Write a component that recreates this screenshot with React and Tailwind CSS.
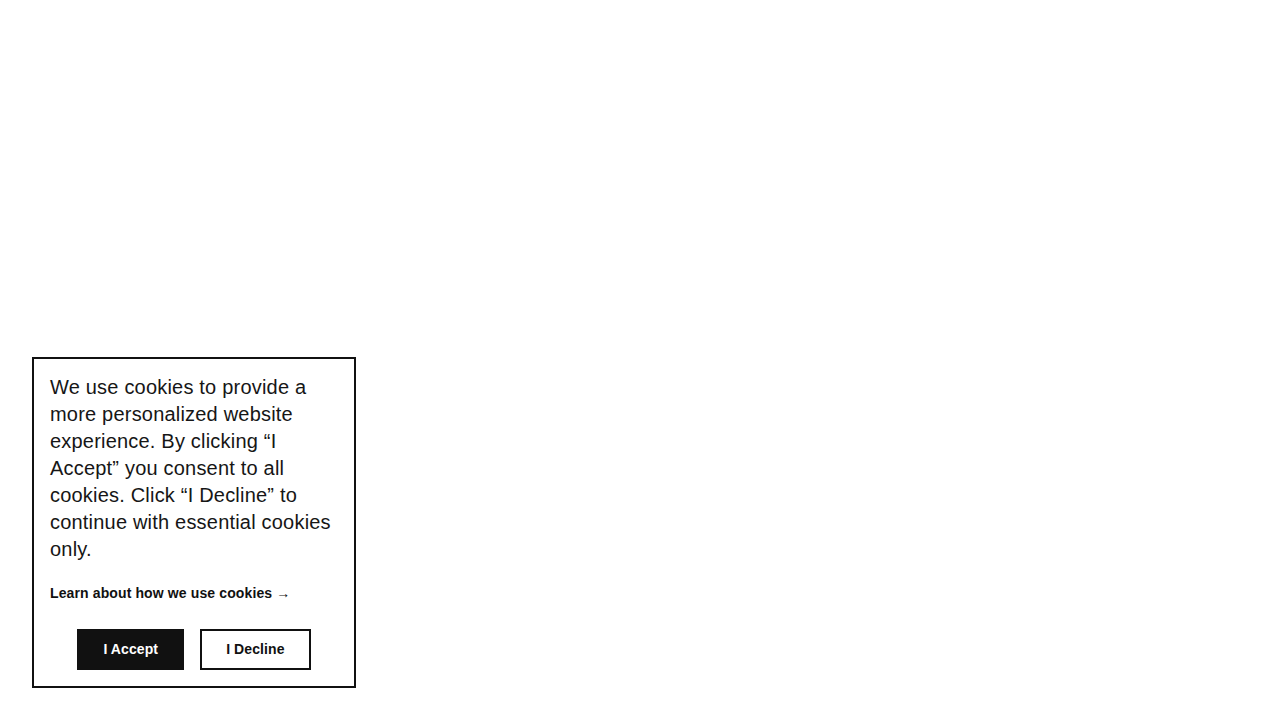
export default function App() {
  return (
    <div className="min-h-screen w-full bg-white" style={{ fontFamily: '"Liberation Sans", Arial, sans-serif' }}>
      <div className="fixed bottom-8 left-8 w-[324px] border-2 border-[#111] bg-white px-4 pt-[15px] pb-4 text-[#161616]">
        <p className="text-[20px] leading-[27px] tracking-[0.2px]">
          We use cookies to provide a more personalized website experience. By clicking “I Accept” you consent to all
          cookies. Click “I Decline” to continue with essential cookies only.
        </p>
        <a href="#" className="mt-5 block text-[14px] font-bold leading-5 tracking-[0.12px] text-[#111]">
          Learn about how we use cookies <span className="font-normal">→</span>
        </a>
        <div className="mt-[26px] flex justify-center gap-4">
          <button className="h-[41px] border-2 border-[#111] bg-[#111] px-6 text-[14px] font-bold tracking-[0.1px] text-white">
            I Accept
          </button>
          <button className="h-[41px] border-2 border-[#111] bg-white px-6 text-[14px] font-bold tracking-[0.1px] text-[#111]">
            I Decline
          </button>
        </div>
      </div>
    </div>
  );
}
